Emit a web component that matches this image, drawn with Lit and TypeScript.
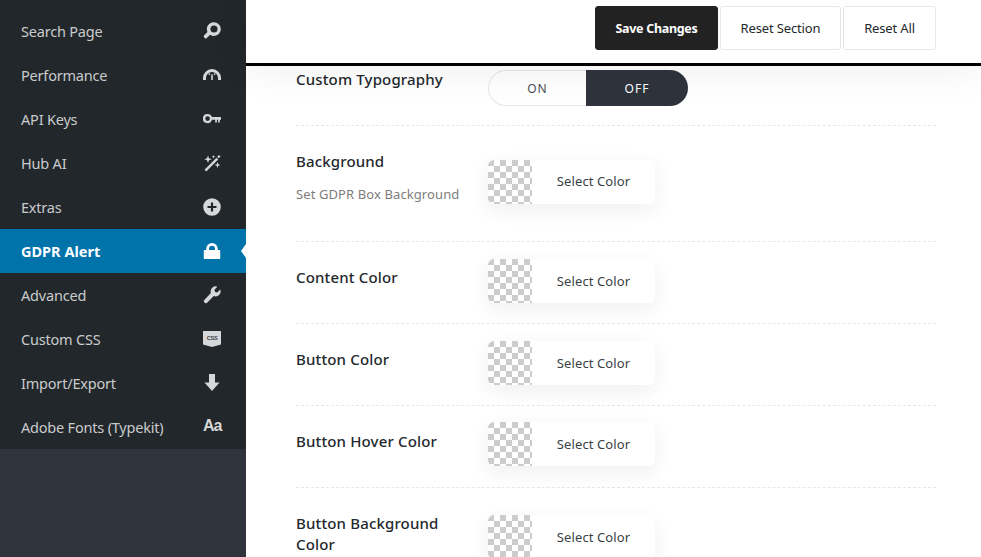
import { LitElement, html, css, svg } from "lit";
import { customElement } from "lit/decorators.js";

const icons: Record<string, unknown> = {
  search: svg`<path fill-rule="evenodd" d="M11 .3a6.800 6.800 0 1 1-3.900 12.400l-3.300 3.200a1.500 1.500 0 0 1-2.100 0l-.5-.5a1.500 1.500 0 0 1 0-2.100l3.300-3.300A6.800 6.800 0 0 1 11 .3zm0 3.200a3.500 3.500 0 1 0 0 7.100 3.500 3.500 0 0 0 0-7.100z"/>`,
  gauge: svg`<path d="M9 3a9 9 0 0 0-9 9v2h3v-2a6 6 0 0 1 6-6 6 6 0 0 1 6 6v2h3v-2a9 9 0 0 0-9-9z"/><path d="M8.200 8.500h1.600V14H8.200zM5.300 8.100l1.100-1 1 1.100-1.100 1zM11.600 7.100l1.100 1-1 1.100-1.100-1z"/>`,
  key: svg`<path fill-rule="evenodd" d="M4.600 4a4.600 4.600 0 0 1 4.300 3H18v2.800h-1.200v2.700h-1.700V9.800h-1.200v2.700h-1.700V9.800H8.900A4.600 4.600 0 1 1 4.600 4zm0 2.300a2.300 2.300 0 1 0 0 4.600 2.300 2.300 0 0 0 0-4.600z"/>`,
  wand: svg`<path d="M13.500 3.800l1.700 1.700L3.200 17.500l-1.700-1.700z"/><path d="M16 1l1.500 1.500-1.800 1.800-1.500-1.500zM5 1.500l1 2.700 2.700 1-2.700 1-1 2.700-1-2.700-2.700-1 2.700-1zM14.500 8l.8 2.200 2.200.8-2.200.8-.8 2.200-.8-2.200-2.200-.8 2.200-.8zM10.500 1l.5 1.300 1.300.5-1.300.5-.5 1.300-.5-1.300-1.300-.5 1.300-.5z"/>`,
  plus: svg`<path fill-rule="evenodd" d="M9 .2a8.800 8.800 0 1 1 0 17.600A8.800 8.800 0 0 1 9 .2zM7.900 4.500v3.400H4.500v2.200h3.400v3.400h2.200v-3.400h3.400V7.900h-3.400V4.500z"/>`,
  lock: svg`<path fill-rule="evenodd" d="M9 1a5.800 5.800 0 0 1 5.800 5.800V8h2.400v9H.8V8h2.400V6.800A5.800 5.800 0 0 1 9 1zm0 2.800A3 3 0 0 0 6 6.800V8h6V6.800a3 3 0 0 0-3-3z"/>`,
  wrench: svg`<path d="M17.300 3.600l-3 3-2.200-.7-.7-2.200 3-3a5 5 0 0 0-6.500 6.200L1.300 13.900a1.600 1.600 0 0 0 0 2.300l.5.500a1.600 1.600 0 0 0 2.300 0l6.700-6.700a5 5 0 0 0 6.500-6.400z"/>`,
  css: svg`<path d="M0 1h18v13.500L9 17 0 14.500z"/><text class="css-t" x="9" y="10.300" text-anchor="middle">CSS</text>`,
  down: svg`<path d="M6 0h6v8.500h4.500L9 17 1.500 8.500H6z"/>`,
};

type Item = { label: string; icon?: string; active?: boolean };
const menu: Item[] = [
  { label: "Search Page", icon: "search" },
  { label: "Performance", icon: "gauge" },
  { label: "API Keys", icon: "key" },
  { label: "Hub AI", icon: "wand" },
  { label: "Extras", icon: "plus" },
  { label: "GDPR Alert", icon: "lock", active: true },
  { label: "Advanced", icon: "wrench" },
  { label: "Custom CSS", icon: "css" },
  { label: "Import/Export", icon: "down" },
  { label: "Adobe Fonts (Typekit)" },
];

type Row = { title: string; desc?: string; cls: string };
const rows: Row[] = [
  { title: "Background", desc: "Set GDPR Box Background", cls: "r-bg" },
  { title: "Content Color", cls: "r-std" },
  { title: "Button Color", cls: "r-std" },
  { title: "Button Hover Color", cls: "r-hover" },
  { title: "Button Background Color", cls: "r-last" },
];

@customElement("app-root")
export class AppRoot extends LitElement {
  static styles = css`
    :host {
      display: flex;
      width: 981px;
      height: 557px;
      overflow: hidden;
      font-family: "Noto Sans", "Open Sans", sans-serif;
      background: #fff;
    }
    .side {
      width: 246px;
      flex: none;
      background: #2f333c;
    }
    .menu {
      background: #22272b;
      padding-top: 9px;
    }
    .item {
      position: relative;
      height: 44px;
      display: flex;
      align-items: center;
      justify-content: space-between;
      padding: 0 25px 0 21px;
      font-size: 14.500px;
      letter-spacing: -0.2px;
      color: #c9cbcc;
    }
    .item.active {
      background: #0073aa;
      color: #fff;
      font-weight: 700;
      letter-spacing: 0;
    }
    .item.active::after {
      content: "";
      position: absolute;
      right: 0;
      top: 50%;
      margin-top: -7px;
      border: 7px solid transparent;
      border-right-color: #fff;
      border-left-width: 0;
      border-right-width: 5px;
    }
    .ico {
      width: 18px;
      height: 18px;
      fill: #d6d7d8;
      display: block;
    }
    .active .ico {
      fill: #fff;
    }
    .css-t {
      font: 700 5.500px "Liberation Sans", sans-serif;
      fill: #3c4043;
    }
    .aa {
      width: 18px;
      text-align: center;
      font: 700 16px/18px "Liberation Sans", sans-serif;
      letter-spacing: -1px;
      color: #d6d7d8;
      margin-top: -2px;
    }
    .main {
      flex: 1;
      min-width: 0;
      display: flex;
      flex-direction: column;
      position: relative;
    }
    .top {
      flex: none;
      border-bottom: 3px solid #000;
      background: #fff;
      display: flex;
      justify-content: flex-end;
      align-items: flex-start;
      gap: 2px;
      padding: 6px 45px 0 0;
      box-sizing: border-box;
      height: 66px;
      position: relative;
      z-index: 2;
      box-shadow: 0 4px 40px rgba(0, 0, 0, 0.07);
    }
    .btn {
      height: 44px;
      box-sizing: border-box;
      border: 1px solid #e6e6e6;
      border-radius: 3px;
      background: #fff;
      color: #23282d;
      font-size: 13px;
      display: flex;
      align-items: center;
      justify-content: center;
      letter-spacing: -0.15px;
    }
    .save {
      width: 123px;
      background: #222;
      border-color: #222;
      color: #fff;
      font-weight: 700;
      font-size: 12.500px;
      letter-spacing: -0.3px;
    }
    .sec {
      width: 121px;
    }
    .all {
      width: 93px;
    }
    .content {
      padding: 0 45px 0 50px;
    }
    .row {
      display: flex;
      box-sizing: border-box;
      border-bottom: 1px dashed #e8e8e8;
    }
    .label {
      width: 192px;
      flex: none;
      box-sizing: border-box;
      padding-right: 24px;
    }
    .title {
      font-size: 15px;
      font-weight: 500;
      line-height: 21px;
      color: #23282d;
      letter-spacing: 0.15px;
    }
    .desc {
      margin-top: 13px;
      font-size: 13px;
      line-height: 18px;
      color: #7d7d7d;
      letter-spacing: 0.1px;
      white-space: nowrap;
    }
    .r-top {
      height: 60px;
      padding-top: 4px;
    }
    .r-top .label {
      margin-top: -1px;
    }
    .r-bg {
      height: 116px;
      padding-top: 34px;
    }
    .r-bg .label {
      margin-top: -9px;
    }
    .r-bg .sel {
      padding-bottom: 2px;
    }
    .r-std {
      height: 82px;
      padding-top: 17px;
    }
    .r-std .label {
      padding-top: 8px;
    }
    .r-hover {
      height: 82px;
      padding-top: 16px;
    }
    .r-hover .label {
      padding-top: 9px;
    }
    .r-last {
      height: 120px;
      padding-top: 27px;
    }
    .r-last .label {
      margin-top: -2px;
    }
    .toggle {
      display: flex;
      width: 200px;
      height: 36px;
      font-size: 12px;
      letter-spacing: 1px;
    }
    .on,
    .off {
      display: flex;
      align-items: center;
      justify-content: center;
      box-sizing: border-box;
    }
    .on {
      width: 98px;
      border: 1px solid #e6e6e6;
      border-right: 0;
      border-radius: 18px 0 0 18px;
      color: #4a4f57;
    }
    .off {
      width: 102px;
      background: #2f333c;
      color: #fff;
      border-radius: 0 18px 18px 0;
    }
    .picker {
      display: flex;
      width: 167px;
      height: 44px;
      border-radius: 6px;
      background: #fff;
      box-shadow: 0 6px 20px rgba(30, 30, 60, 0.07);
      overflow: hidden;
    }
    .swatch {
      width: 44px;
      height: 44px;
      flex: none;
      background-color: #fff;
      background-image: conic-gradient(#fff 25%, #ccc 0 50%, #fff 0 75%, #ccc 0);
      background-size: 12px 12px;
    }
    .sel {
      flex: 1;
      display: flex;
      align-items: center;
      justify-content: center;
      font-size: 13px;
      color: #3a3f47;
      letter-spacing: 0.1px;
    }
  `;

  private renderIcon(it: Item) {
    if (!it.icon) return html`<span class="aa">Aa</span>`;
    return html`<svg class="ico" viewBox="0 0 18 18">${icons[it.icon]}</svg>`;
  }

  render() {
    return html`
      <nav class="side">
        <div class="menu">
          ${menu.map(
            (it) => html`<div class="item ${it.active ? "active" : ""}">
              <span>${it.label}</span>${this.renderIcon(it)}
            </div>`
          )}
        </div>
      </nav>
      <main class="main">
        <header class="top">
          <div class="btn save">Save Changes</div>
          <div class="btn sec">Reset Section</div>
          <div class="btn all">Reset All</div>
        </header>
        <section class="content">
          <div class="row r-top">
            <div class="label"><div class="title">Custom Typography</div></div>
            <div class="toggle">
              <div class="on">ON</div>
              <div class="off">OFF</div>
            </div>
          </div>
          ${rows.map(
            (r) => html`<div class="row ${r.cls}">
              <div class="label">
                <div class="title">${r.title}</div>
                ${r.desc ? html`<div class="desc">${r.desc}</div>` : ""}
              </div>
              <div class="picker">
                <div class="swatch"></div>
                <div class="sel">Select Color</div>
              </div>
            </div>`
          )}
        </section>
      </main>
    `;
  }
}
